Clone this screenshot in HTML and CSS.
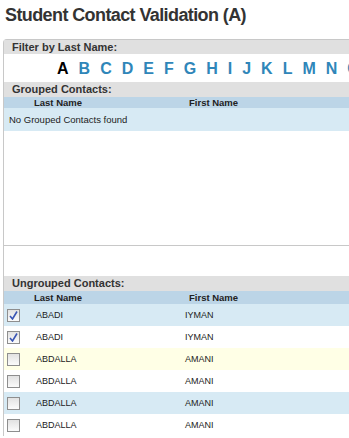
FILE: index.html
```html
<!DOCTYPE html>
<html lang="en">
<head>
  <meta charset="UTF-8" />
  <meta name="viewport" content="width=device-width, initial-scale=1.0" />
  <title>Student Contact Validation</title>
  <link rel="stylesheet" href="styles.css">
</head>
<body>
  <h1 class="title">Student Contact Validation (A)</h1>

  <div class="panel">
    <div class="band">Filter by Last Name:</div>
    <div class="letters">
      <a class="current">A</a>
      <a>B</a><a>C</a><a>D</a><a>E</a><a>F</a><a>G</a><a>H</a>
      <a>I</a><a>J</a><a>K</a><a>L</a><a>M</a><a>N</a><a>O</a>
    </div>

    <div class="band tall">Grouped Contacts:</div>
    <div class="grouped">
      <div class="colhead">
        <span class="c-last">Last Name</span>
        <span class="c-first">First Name</span>
      </div>
      <div class="empty">No Grouped Contacts found</div>
    </div>

    <div class="spacer"></div>

    <div class="band tall">Ungrouped Contacts:</div>
    <div class="colhead ung">
      <span class="c-last">Last Name</span>
      <span class="c-first">First Name</span>
    </div>
    <div class="row blue">
      <span class="chk on"><svg width="9" height="9" viewBox="0 0 9 9"><path d="M1 5 L3.5 8 L8 0.5" fill="none" stroke="#3a55b4" stroke-width="1.6"/></svg></span>
      <span class="last">ABADI</span>
      <span class="first">IYMAN</span>
    </div>
    <div class="row">
      <span class="chk on"><svg width="9" height="9" viewBox="0 0 9 9"><path d="M1 5 L3.5 8 L8 0.5" fill="none" stroke="#3a55b4" stroke-width="1.6"/></svg></span>
      <span class="last">ABADI</span>
      <span class="first">IYMAN</span>
    </div>
    <div class="row cream">
      <span class="chk"></span>
      <span class="last">ABDALLA</span>
      <span class="first">AMANI</span>
    </div>
    <div class="row">
      <span class="chk"></span>
      <span class="last">ABDALLA</span>
      <span class="first">AMANI</span>
    </div>
    <div class="row blue">
      <span class="chk"></span>
      <span class="last">ABDALLA</span>
      <span class="first">AMANI</span>
    </div>
    <div class="row">
      <span class="chk"></span>
      <span class="last">ABDALLA</span>
      <span class="first">AMANI</span>
    </div>
  </div>
</body>
</html>
```

FILE: styles.css
```css
html, body {
  overflow: hidden;
}
body {
  margin: 0;
  padding: 0 0 0 3px;
  font-family: "Liberation Sans", Arial, sans-serif;
  color: #333;
  background: #fff;
}
.title {
  font-size: 18px;
  letter-spacing: -0.6px;
  line-height: 22px;
  margin: 4px 0 13px 2px;
  color: #333;
  white-space: nowrap;
}
.panel {
  width: 600px;
  border-left: 1px solid #c8c8c8;
  border-top: 1px solid #c8c8c8;
  border-top-left-radius: 4px;
}
.band {
  height: 14px;
  line-height: 14px;
  background: #e0e0e0;
  font-size: 11px;
  font-weight: bold;
  padding-left: 8px;
  color: #333;
}
.band.tall {
  height: 15px;
  line-height: 15px;
}
.letters {
  display: flex;
  gap: 10px;
  height: 26px;
  padding: 2px 0 0 53px;
  line-height: 26px;
  font-size: 16px;
  font-weight: bold;
}
.letters a {
  color: #2f86b9;
}
.letters a.current {
  color: #000;
}
.grouped {
  height: 148px;
  border-bottom: 1px solid #c8c8c8;
}
.colhead {
  display: flex;
  height: 11px;
  line-height: 11px;
  background: #bcd5e7;
  font-size: 9.5px;
  font-weight: bold;
  color: #222;
}
.colhead.ung {
  height: 13px;
  line-height: 13px;
}
.c-last {
  padding-left: 30px;
  width: 155px;
}
.empty {
  height: 23px;
  line-height: 23px;
  background: #d7eaf4;
  font-size: 9.5px;
  padding-left: 5px;
  color: #222;
}
.spacer {
  height: 30px;
}
.row {
  display: flex;
  align-items: center;
  height: 22px;
  font-size: 9px;
  color: #222;
}
.row.blue {
  background: #d7eaf4;
}
.row.cream {
  background: #ffffe6;
}
.chk {
  width: 11px;
  height: 11px;
  margin-left: 3px;
  border: 1px solid #8e8e8e;
  background: linear-gradient(#e2e2e2, #fbfbfb);
  display: flex;
  align-items: center;
  justify-content: center;
}
.last {
  margin-left: 16px;
  width: 149px;
}
```
